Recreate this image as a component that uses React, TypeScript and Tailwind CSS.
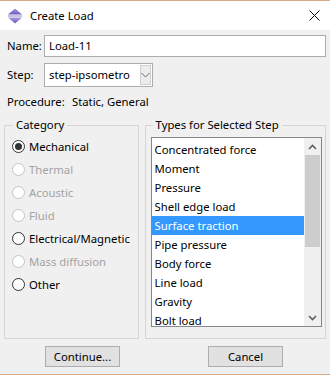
import React from "react";

const font = { fontFamily: '"Noto Sans", "Open Sans", sans-serif' };

function Radio({ label, checked, disabled }: { label: string; checked?: boolean; disabled?: boolean }) {
  return (
    <div className="flex h-[23px] items-center">
      <div
        className={`ml-[7px] flex h-[13px] w-[13px] items-center justify-center rounded-full border bg-white ${
          disabled ? "border-[#c4c4c4]" : "border-[#333333]"
        }`}
      >
        {checked && <div className="h-[7px] w-[7px] rounded-full bg-[#333333]" />}
      </div>
      <span className={`ml-[4px] ${disabled ? "text-[#a3a3a3]" : "text-black"}`}>{label}</span>
    </div>
  );
}

const items = [
  "Concentrated force",
  "Moment",
  "Pressure",
  "Shell edge load",
  "Surface traction",
  "Pipe pressure",
  "Body force",
  "Line load",
  "Gravity",
  "Bolt load",
];

export default function App() {
  return (
    <div
      className="flex h-[375px] w-[330px] flex-col overflow-hidden border-y border-[#dba884] bg-[#f0f0f0] text-[11.3px] leading-none text-black"
      style={font}
    >
      {/* Title bar */}
      <div className="flex h-[29px] shrink-0 items-center bg-white">
        <svg width="16" height="16" viewBox="0 0 16 16" className="ml-[7px]">
          <defs>
            <linearGradient id="g" x1="0" y1="0" x2="0" y2="1">
              <stop offset="0" stopColor="#a79be0" />
              <stop offset="1" stopColor="#6a5cc0" />
            </linearGradient>
          </defs>
          <path d="M8 0.5 L15 6.5 L1 6.5 Z" fill="url(#g)" />
          <rect x="1" y="7.3" width="14" height="1.4" fill="#b4acd8" />
          <path d="M8 15.5 L15 9.5 L1 9.5 Z" fill="url(#g)" />
        </svg>
        <span className="ml-[7px]">Create Load</span>
        <svg width="11" height="11" viewBox="0 0 11 11" className="ml-auto mr-[10px]">
          <path d="M0.5 0.5 L10.5 10.5 M10.5 0.5 L0.5 10.5" stroke="#111" strokeWidth="1" />
        </svg>
      </div>

      <div className="flex flex-1 flex-col px-[4px]">
        {/* Name */}
        <div className="mt-[5px] flex h-[22px] items-center">
          <span className="ml-[3px] w-[37px]">Name:</span>
          <div className="flex h-[22px] flex-1 items-center border border-[#adadad] bg-white pl-[4px]">
            Load-11
          </div>
        </div>
        {/* Step */}
        <div className="mt-[6px] flex h-[24px] items-center">
          <span className="ml-[3px] w-[37px]">Step:</span>
          <div className="flex h-[24px] w-[109px] items-center border border-[#adadad] bg-white pl-[4px]">
            <span className="flex-1">step-ipsometro</span>
            <div className="mr-[1px] flex h-[20px] w-[11px] items-center justify-center border border-[#d0d0d0] bg-[#ececec]">
              <svg width="9" height="6" viewBox="0 0 9 6">
                <path d="M0.5 1 L4.5 5 L8.5 1" stroke="#6a6a6a" strokeWidth="1" fill="none" />
              </svg>
            </div>
          </div>
        </div>
        {/* Procedure */}
        <div className="mt-[8px] flex h-[14px] items-center">
          <span className="ml-[3px] w-[65px]">Procedure:</span>
          <span>Static, General</span>
        </div>

        {/* Groups */}
        <div className="mt-[9px] flex gap-[6px]">
          <fieldset className="h-[221px] w-[135px] border border-[#d5d5d5]">
            <legend className="ml-[8px] px-[3px] leading-[14px]">Category</legend>
            <div className="mt-[3px] flex flex-col">
              <Radio label="Mechanical" checked />
              <Radio label="Thermal" disabled />
              <Radio label="Acoustic" disabled />
              <Radio label="Fluid" disabled />
              <Radio label="Electrical/Magnetic" />
              <Radio label="Mass diffusion" disabled />
              <Radio label="Other" />
            </div>
          </fieldset>
          <fieldset className="h-[221px] w-[182px] border border-[#d5d5d5]">
            <legend className="ml-[7px] px-[3px] leading-[14px]">Types for Selected Step</legend>
            <div className="ml-[5px] mt-[5px] flex h-[190px] w-[171px] border border-[#828790] bg-white">
              <div className="flex flex-1 flex-col pt-[2px]">
                {items.map((it) => (
                  <div
                    key={it}
                    className={`flex h-[19px] shrink-0 items-center pl-[3px] ${
                      it === "Surface traction" ? "bg-[#3399ff] text-white" : ""
                    }`}
                  >
                    {it}
                  </div>
                ))}
              </div>
              <div className="flex w-[17px] flex-col bg-[#f0f0f0]">
                <div className="flex h-[17px] items-center justify-center">
                  <svg width="9" height="6" viewBox="0 0 9 6">
                    <path d="M1 5 L4.5 1.5 L8 5" stroke="#606060" strokeWidth="1.6" fill="none" />
                  </svg>
                </div>
                <div className="mx-[1px] h-[92px] bg-[#cdcdcd]" />
                <div className="flex-1" />
                <div className="flex h-[17px] items-center justify-center">
                  <svg width="9" height="6" viewBox="0 0 9 6">
                    <path d="M1 1 L4.5 4.5 L8 1" stroke="#606060" strokeWidth="1.6" fill="none" />
                  </svg>
                </div>
              </div>
            </div>
          </fieldset>
        </div>

        {/* Buttons */}
        <div className="mt-[7px] flex">
          <button className="ml-[41px] flex h-[21px] w-[75px] items-center justify-center border border-[#adadad] bg-[#e1e1e1]">
            Continue...
          </button>
          <button className="ml-[88px] flex h-[21px] w-[75px] items-center justify-center border border-[#adadad] bg-[#e1e1e1]">
            Cancel
          </button>
        </div>
      </div>
    </div>
  );
}
